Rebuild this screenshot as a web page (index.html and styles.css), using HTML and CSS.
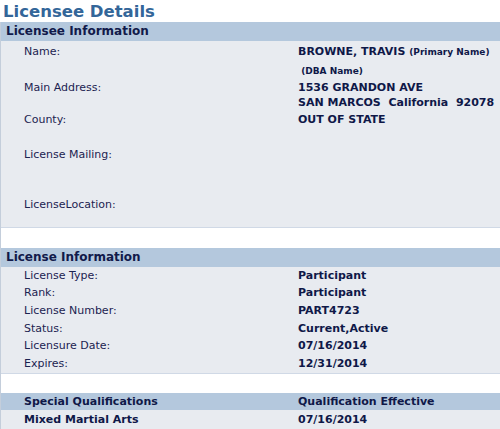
FILE: index.html
```html
<!DOCTYPE html>
<html>
<head>
<meta charset="utf-8">
<link rel="stylesheet" href="styles.css">
</head>
<body>
<h1 class="title">Licensee Details</h1>
<div class="panel">
  <div class="section">
    <div class="head">Licensee Information</div>
    <div class="body body-1">
      <div class="row r-name"><span class="lbl">Name:</span><span class="val">BROWNE, TRAVIS <small>(Primary Name)</small></span></div>
      <div class="row r-dba"><span class="lbl"></span><span class="val"><small> (DBA Name)</small></span></div>
      <div class="row r-addr"><span class="lbl">Main Address:</span><span class="val multi">1536 GRANDON AVE
SAN MARCOS  California  92078</span></div>
      <div class="row r-county"><span class="lbl">County:</span><span class="val">OUT OF STATE</span></div>
      <div class="row r-mail"><span class="lbl">License Mailing:</span><span class="val"></span></div>
      <div class="row r-loc"><span class="lbl">LicenseLocation:</span><span class="val"></span></div>
    </div>
  </div>
  <div class="section section-2">
    <div class="head">License Information</div>
    <div class="body body-2">
      <div class="row"><span class="lbl">License Type:</span><span class="val">Participant</span></div>
      <div class="row"><span class="lbl">Rank:</span><span class="val">Participant</span></div>
      <div class="row"><span class="lbl">License Number:</span><span class="val">PART4723</span></div>
      <div class="row"><span class="lbl">Status:</span><span class="val">Current,Active</span></div>
      <div class="row"><span class="lbl">Licensure Date:</span><span class="val">07/16/2014</span></div>
      <div class="row"><span class="lbl">Expires:</span><span class="val">12/31/2014</span></div>
    </div>
  </div>
  <div class="quals">
    <div class="row qhead"><span class="lbl">Special Qualifications</span><span class="val">Qualification Effective</span></div>
    <div class="row qrow"><span class="lbl">Mixed Martial Arts</span><span class="val">07/16/2014</span></div>
  </div>
</div>
</body>
</html>
```

FILE: styles.css
```css
html, body {
  margin: 0;
  padding: 0;
  background: #ffffff;
}
body {
  font-family: "DejaVu Sans", Verdana, sans-serif;
  color: #1c2350;
  width: 500px;
  overflow: hidden;
}
.title {
  margin: 0;
  padding: 2px 0 0 3px;
  height: 20px;
  font-size: 16.5px;
  line-height: 20px;
  font-weight: bold;
  color: #336699;
}
.panel {
  border-left: 1px solid #c4cedb;
}
.section {
  border-bottom: 1px solid #d0d9e6;
  margin-bottom: 20px;
}
.section-2 {
  margin-bottom: 19px;
}
.head {
  background: #b4c8dd;
  height: 19px;
  line-height: 19px;
  padding-left: 5px;
  font-size: 12px;
  font-weight: bold;
  color: #111a4a;
}
.body {
  background: #e8ebf0;
}
.row {
  display: grid;
  grid-template-columns: 297px 1fr;
  font-size: 11px;
  line-height: 17.6px;
}
.lbl {
  padding-left: 23px;
  color: #1c2350;
}
.val {
  font-weight: bold;
  color: #0f1848;
  white-space: pre;
}
.val small {
  font-size: 9px;
}
.r-name {
  padding-top: 2px;
}
.r-dba {
  line-height: 17px;
}
.r-addr {
  line-height: 15px;
  padding: 0 0 1px;
}
.r-county {
  line-height: 17px;
}
.r-mail {
  margin-top: 18px;
}
.r-loc {
  margin-top: 33px;
  padding-bottom: 13px;
}
.body-2 {
  padding-bottom: 1px;
}
.quals .row {
  font-weight: bold;
  font-size: 11px;
}
.quals .lbl {
  color: #0f1848;
}
.qhead {
  background: #b4c8dd;
  line-height: 17px;
}
.qrow {
  background: #e8ebf0;
  line-height: 20px;
}
```
